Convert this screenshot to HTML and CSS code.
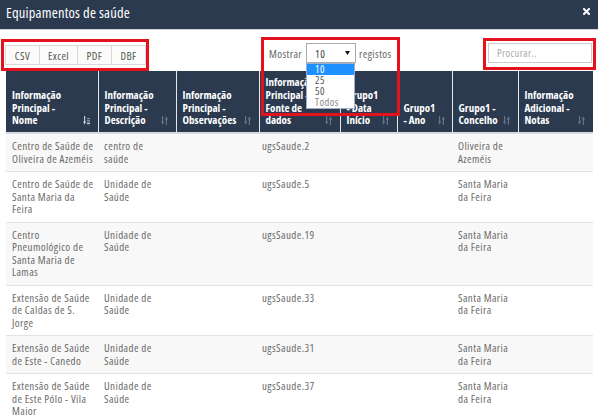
FILE: index.html
```html
<!DOCTYPE html>
<html lang="pt">
<head>
<meta charset="utf-8">
<title>Equipamentos de saúde</title>
<link rel="stylesheet" href="styles.css">
</head>
<body>
<div class="modal">
  <header class="modal-head">
    <h1 class="title">Equipamentos de saúde</h1>
    <span class="close" aria-label="Fechar">
      <svg width="7" height="7" viewBox="0 0 7 7"><path d="M1 1L6 6M6 1L1 6" stroke="#fff" stroke-width="2" stroke-linecap="square"/></svg>
    </span>
  </header>

  <div class="toolbar">
    <div class="btn-group">
      <button class="btn btn-csv">CSV</button>
      <button class="btn btn-excel">Excel</button>
      <button class="btn btn-pdf">PDF</button>
      <button class="btn btn-dbf">DBF</button>
    </div>
    <div class="length">
      <span>Mostrar</span>
      <div class="select-wrap">
        <div class="select"><span class="select-value">10</span>
          <svg class="caret" width="5" height="4" viewBox="0 0 5 4"><path d="M0 0H5L2.5 4Z" fill="#111"/></svg>
        </div>
        <ul class="options">
          <li class="opt active">10</li>
          <li class="opt">25</li>
          <li class="opt">50</li>
          <li class="opt opt-all">Todos</li>
        </ul>
      </div>
      <span>registos</span>
    </div>
    <input class="search" type="text" placeholder="Procurar..">
  </div>

  <table class="grid">
    <colgroup>
      <col class="c1"><col class="c2"><col class="c3"><col class="c4"><col class="c5"><col class="c6"><col class="c7"><col class="c8">
    </colgroup>
    <thead>
      <tr>
        <th><div class="th-inner"><span>Informação Principal - Nome</span>
          <svg class="sort" width="7" height="9" viewBox="0 0 7 9"><rect x="1" y="0" width="1.2" height="6.5" fill="#c3cad3"/><path d="M0 5.5H3.2L1.6 8.8Z" fill="#c3cad3"/><rect x="4" y="2" width="3" height="1.2" fill="#8d98a8"/><rect x="4" y="4.3" width="3" height="1.2" fill="#a3adba"/><rect x="4" y="6.6" width="3" height="1.6" fill="#c3cad3"/></svg></div></th>
        <th><div class="th-inner"><span>Informação Principal - Descrição</span>
          <svg class="sort" width="7" height="9" viewBox="0 0 7 9"><rect x="1" y="0" width="1.2" height="6.5" fill="#66748a"/><path d="M0 5.5H3.2L1.6 8.8Z" fill="#66748a"/><rect x="4.8" y="2.5" width="1.2" height="6.5" fill="#66748a"/><path d="M3.8 3.5H7L5.4 0.2Z" fill="#66748a"/></svg></div></th>
        <th><div class="th-inner"><span>Informação Principal - Observações</span>
          <svg class="sort" width="7" height="9" viewBox="0 0 7 9"><rect x="1" y="0" width="1.2" height="6.5" fill="#66748a"/><path d="M0 5.5H3.2L1.6 8.8Z" fill="#66748a"/><rect x="4.8" y="2.5" width="1.2" height="6.5" fill="#66748a"/><path d="M3.8 3.5H7L5.4 0.2Z" fill="#66748a"/></svg></div></th>
        <th><div class="th-inner"><span>Informação Principal - Fonte de dados</span>
          <svg class="sort" width="7" height="9" viewBox="0 0 7 9"><rect x="1" y="0" width="1.2" height="6.5" fill="#66748a"/><path d="M0 5.5H3.2L1.6 8.8Z" fill="#66748a"/><rect x="4.8" y="2.5" width="1.2" height="6.5" fill="#66748a"/><path d="M3.8 3.5H7L5.4 0.2Z" fill="#66748a"/></svg></div></th>
        <th><div class="th-inner"><span>Grupo1 - Data Início</span>
          <svg class="sort" width="7" height="9" viewBox="0 0 7 9"><rect x="1" y="0" width="1.2" height="6.5" fill="#66748a"/><path d="M0 5.5H3.2L1.6 8.8Z" fill="#66748a"/><rect x="4.8" y="2.5" width="1.2" height="6.5" fill="#66748a"/><path d="M3.8 3.5H7L5.4 0.2Z" fill="#66748a"/></svg></div></th>
        <th><div class="th-inner"><span>Grupo1 - Ano</span>
          <svg class="sort" width="7" height="9" viewBox="0 0 7 9"><rect x="1" y="0" width="1.2" height="6.5" fill="#66748a"/><path d="M0 5.5H3.2L1.6 8.8Z" fill="#66748a"/><rect x="4.8" y="2.5" width="1.2" height="6.5" fill="#66748a"/><path d="M3.8 3.5H7L5.4 0.2Z" fill="#66748a"/></svg></div></th>
        <th><div class="th-inner"><span>Grupo1 - Concelho</span>
          <svg class="sort" width="7" height="9" viewBox="0 0 7 9"><rect x="1" y="0" width="1.2" height="6.5" fill="#66748a"/><path d="M0 5.5H3.2L1.6 8.8Z" fill="#66748a"/><rect x="4.8" y="2.5" width="1.2" height="6.5" fill="#66748a"/><path d="M3.8 3.5H7L5.4 0.2Z" fill="#66748a"/></svg></div></th>
        <th><div class="th-inner"><span>Informação Adicional - Notas</span>
          <svg class="sort" width="7" height="9" viewBox="0 0 7 9"><rect x="1" y="0" width="1.2" height="6.5" fill="#66748a"/><path d="M0 5.5H3.2L1.6 8.8Z" fill="#66748a"/><rect x="4.8" y="2.5" width="1.2" height="6.5" fill="#66748a"/><path d="M3.8 3.5H7L5.4 0.2Z" fill="#66748a"/></svg></div></th>
      </tr>
    </thead>
    <tbody>
      <tr>
        <td>Centro de Saúde de Oliveira de Azeméis</td><td>centro de saúde</td><td></td><td>ugsSaude.2</td><td></td><td></td><td>Oliveira de Azeméis</td><td></td>
      </tr>
      <tr>
        <td>Centro de Saúde de Santa Maria da Feira</td><td>Unidade de Saúde</td><td></td><td>ugsSaude.5</td><td></td><td></td><td>Santa Maria da Feira</td><td></td>
      </tr>
      <tr>
        <td>Centro Pneumológico de Santa Maria de Lamas</td><td>Unidade de Saúde</td><td></td><td>ugsSaude.19</td><td></td><td></td><td>Santa Maria da Feira</td><td></td>
      </tr>
      <tr>
        <td>Extensão de Saúde de Caldas de S. Jorge</td><td>Unidade de Saúde</td><td></td><td>ugsSaude.33</td><td></td><td></td><td>Santa Maria da Feira</td><td></td>
      </tr>
      <tr>
        <td>Extensão de Saúde de Este - Canedo</td><td>Unidade de Saúde</td><td></td><td>ugsSaude.31</td><td></td><td></td><td>Santa Maria da Feira</td><td></td>
      </tr>
      <tr>
        <td>Extensão de Saúde de Este Pólo - Vila Maior</td><td>Unidade de Saúde</td><td></td><td>ugsSaude.37</td><td></td><td></td><td>Santa Maria da Feira</td><td></td>
      </tr>
    </tbody>
  </table>

  <div class="mark mark-buttons"></div>
  <div class="mark mark-length"></div>
  <div class="mark mark-search"></div>
</div>
</body>
</html>
```

FILE: styles.css
```css
html, body {
  margin: 0;
  padding: 0;
  overflow: hidden;
  background: #fff;
}

body {
  font-family: "Open Sans", "Liberation Sans", sans-serif;
  font-stretch: 75%;
  font-size: 11px;
  letter-spacing: 0.4px;
  color: #666;
}

.modal {
  position: relative;
  width: 598px;
  height: 420px;
  overflow: hidden;
}

/* ---------- header ---------- */
.modal-head {
  height: 29px;
  background: #2b3a4f;
  border-bottom: 1px solid #cfd4da;
  display: flex;
  align-items: flex-start;
  justify-content: space-between;
  padding: 0 8px 0 6px;
}

.title {
  margin: 0;
  padding-top: 5px;
  font-size: 14.5px;
  letter-spacing: 0.2px;
  line-height: 16px;
  font-weight: normal;
  color: #fff;
}

.close {
  display: block;
  margin-top: 8px;
  width: 7px;
  height: 7px;
}

.close svg { display: block; }

/* ---------- toolbar ---------- */
.toolbar {
  display: flex;
  align-items: flex-start;
  height: 41px;
  box-sizing: border-box;
  padding-top: 13px;
}

.btn-group {
  display: flex;
  margin-left: 5px;
  margin-top: 2px;
}

.btn {
  font-family: inherit;
  font-stretch: inherit;
  letter-spacing: inherit;
  font-size: 11px;
  color: #555;
  background: #fbfbfb;
  border: 1px solid #d9d9d9;
  height: 20px;
  padding: 0;
  margin: 0;
  display: flex;
  align-items: center;
  justify-content: center;
}

.btn + .btn { margin-left: -1px; }

.btn-csv { width: 35px; }
.btn-excel { width: 39px; }
.btn-pdf { width: 35px; }
.btn-dbf { width: 35px; }

.length {
  display: flex;
  align-items: center;
  height: 20px;
  margin-left: 123px;
  color: #666;
}

.select-wrap {
  position: relative;
  margin: 0 3px 0 4px;
}

.select {
  width: 50px;
  height: 20px;
  box-sizing: border-box;
  border: 1px solid #a9a9a9;
  background: #fff;
  display: flex;
  align-items: center;
  justify-content: space-between;
  padding: 0 5px 0 8px;
  color: #444;
}

.caret { display: block; }

.options {
  position: absolute;
  top: 100%;
  left: 0;
  width: 49px;
  margin: 0;
  padding: 0;
  list-style: none;
  border: 1px solid #9fb0cc;
  background: #fff;
  box-sizing: border-box;
  z-index: 2;
}

.opt {
  height: 11px;
  line-height: 11px;
  padding-left: 8px;
  font-size: 10.5px;
  color: #555;
}

.opt.active {
  background: #1e90ff;
  color: #fff;
}

.opt-all { color: #8a8a8a; }

.search {
  margin-left: auto;
  margin-right: 6px;
  width: 104px;
  height: 20px;
  box-sizing: border-box;
  border: 1px solid #cccccc;
  padding: 0 0 0 8px;
  font-family: inherit;
  font-stretch: inherit;
  letter-spacing: inherit;
  font-size: 10.5px;
  color: #aaa;
  outline: none;
}

.search::placeholder { color: #aaa; }

/* ---------- table ---------- */
.grid {
  margin-left: 6px;
  width: 587px;
  border-collapse: collapse;
  table-layout: fixed;
}

.c1 { width: 92px; }
.c2 { width: 78px; }
.c3 { width: 83px; }
.c4 { width: 81px; }
.c5 { width: 57px; }
.c6 { width: 55px; }
.c7 { width: 66px; }
.c8 { width: 75px; }

.grid thead tr { height: 62px; }

.grid th {
  background: #2b3a4f;
  color: #fff;
  font-weight: bold;
  letter-spacing: 0;
  text-align: left;
  vertical-align: bottom;
  padding: 0 8px 5px 6px;
  line-height: 12.7px;
  border-left: 1px solid #e6e8eb;
  border-bottom: 2px solid #d8dbdf;
}

.grid th:first-child { border-left: none; }

.th-inner {
  display: flex;
  align-items: flex-end;
  justify-content: space-between;
  gap: 3px;
}

.sort {
  flex: none;
  display: block;
  margin-bottom: 2px;
}

.grid td {
  padding: 6px 3px 6px 6px;
  vertical-align: top;
  line-height: 12.5px;
  color: #6a6a6a;
  border-top: 1px solid #e3e3e3;
}

.grid td:nth-child(2) { padding-right: 8px; }
.grid td:nth-child(4) { padding-left: 3px; }

.grid tbody tr:nth-child(odd) td { background: #f8f8f8; }
.grid tbody tr:first-child td { border-top: none; }

/* ---------- annotation boxes ---------- */
.mark {
  position: absolute;
  border: 3px solid #e3121c;
  box-sizing: border-box;
  pointer-events: none;
  z-index: 3;
}

.mark-buttons { left: 1px; top: 39px; width: 148px; height: 32px; }
.mark-length { left: 261px; top: 37px; width: 139px; height: 79px; }
.mark-search { left: 483px; top: 38px; width: 113px; height: 32px; }
```
